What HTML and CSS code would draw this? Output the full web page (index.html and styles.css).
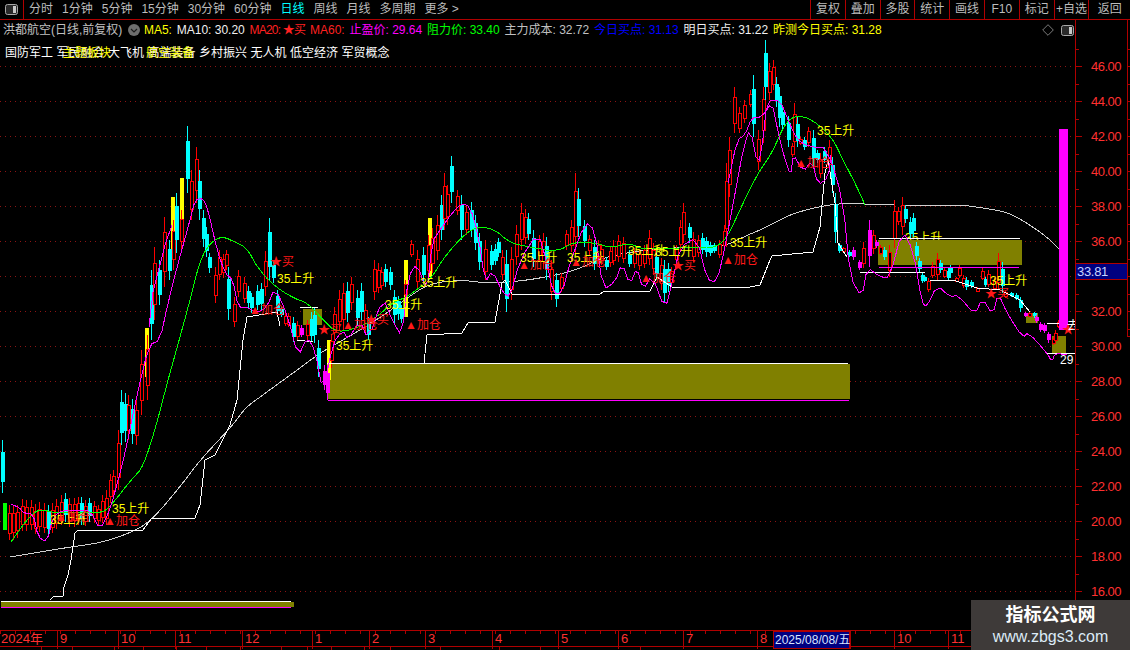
FILE: index.html
```html
<!DOCTYPE html>
<html lang="zh">
<head>
<meta charset="utf-8">
<title>洪都航空</title>
<link rel="stylesheet" href="styles.css">
</head>
<body>
<div class="app">
  <header class="topbar">
    <div class="panel-btn">
      <svg class="panel-icon" viewBox="0 0 13 11"><rect x="0.5" y="0.5" width="12" height="10" rx="2"/><rect class="panel-icon-fill" x="8" y="2" width="3" height="7"/></svg>
    </div>
    <nav class="tabs">
      <span>分时</span><span>1分钟</span><span>5分钟</span><span>15分钟</span><span>30分钟</span><span>60分钟</span>
      <span class="tab-on">日线</span><span>周线</span><span>月线</span><span>多周期</span><span>更多 &gt;</span>
    </nav>
    <div class="tools">
      <span>复权</span><span>叠加</span><span>多股</span><span>统计</span><span>画线</span><span>F10</span><span>标记</span><span>+自选</span><span>返回</span>
    </div>
  </header>
  <main class="stage">
    <svg id="chart" class="chart" viewBox="0 20 1130 610" width="1130" height="610"></svg>
    <div class="legend">
      <span class="c-grey">洪都航空(日线,前复权)</span>
      <svg class="chev" viewBox="0 0 12 12"><circle cx="6" cy="6" r="6"/><path d="M3 5l3 3 3-3"/></svg>
      <span class="c-yellow">MA5:</span>
      <span class="c-white">MA10: 30.20</span>
      <span class="c-red tight">MA20: ★买</span>
      <span class="c-red">MA60:</span>
      <span class="c-magenta">止盈价: 29.64</span>
      <span class="c-green">阻力价: 33.40</span>
      <span class="c-grey">主力成本: 32.72</span>
      <span class="c-blue">今日买点: 31.13</span>
      <span class="c-white">明日买点: 31.22</span>
      <span class="c-yellow">昨测今日买点: 31.28</span>
      <div class="legend-icons">
        <svg class="diamond" viewBox="0 0 12 12"><path d="M6 .7L11.3 6 6 11.3.7 6z"/></svg>
        <svg class="panel-icon" viewBox="0 0 13 11"><rect x="0.5" y="0.5" width="12" height="10" rx="2"/><rect class="panel-icon-fill" x="8" y="2" width="3" height="7"/></svg>
      </div>
    </div>
    <div class="tags">
      <span>国防军工</span><span>军民融合</span><span>大飞机</span><span>高端装备</span><span>乡村振兴</span><span>无人机</span><span>低空经济</span><span>军贸概念</span>
      <span class="tag-over tag-a">主题板块</span><span class="tag-over tag-b">航空装备</span>
    </div>
  </main>
  <footer class="timeaxis">
    <span>2024年</span><span>9</span><span>10</span><span>11</span><span>12</span><span>1</span><span>2</span><span>3</span><span>4</span><span>5</span><span>6</span><span>7</span><span>8</span><span class="t-cursor">2025/08/08/五</span><span></span><span>10</span><span>11</span>
  </footer>
  <div class="subticks">
    <i></i><i></i><i></i><i></i><i></i><i></i><i></i><i></i><i></i><i></i><i></i><i></i><i></i><i></i><i></i><i></i><i></i>
  </div>
  <aside class="watermark">
    <strong>指标公式网</strong>
    <span>www.zbgs3.com</span>
  </aside>
</div>
<script src="chart.js"></script>
</body>
</html>
```
FILE: styles.css
```css
* { box-sizing: border-box; }
html, body { margin: 0; padding: 0; background: #000; }
body { font-family: "Liberation Sans", "Noto Sans CJK SC", sans-serif; font-size: 12px; }
.app { position: relative; width: 1130px; height: 650px; overflow: hidden; background: #000; display: flex; flex-direction: column; }

.topbar { flex: none; height: 20px; display: flex; border-bottom: 1px solid #b00000; color: #bcbcbc; line-height: 19px; }
.panel-btn { width: 24px; display: flex; align-items: center; justify-content: center; border-right: 1px solid #b00000; }
.panel-icon { width: 13px; height: 11px; display: block; }
.panel-icon rect { fill: #2a2a2a; stroke: #a8a8a8; }
.panel-icon .panel-icon-fill { fill: #c8c8c8; stroke: none; }
.tabs { display: flex; gap: 9px; padding-left: 5px; white-space: nowrap; }
.tab-on { color: #00ffff; }
.tools { margin-left: auto; display: flex; width: 320px; }
.tools span { width: 34.8px; text-align: center; border-left: 1px solid #b00000; white-space: nowrap; }
.tools span:last-child { flex: 1; }

.stage { flex: none; position: relative; height: 610px; }
.chart { display: block; font-family: "Liberation Sans", "Noto Sans CJK SC", sans-serif; font-size: 12px; shape-rendering: crispEdges; }
.legend { position: absolute; left: 3px; top: 1px; width: 1072px; height: 18px; display: flex; align-items: center; gap: 4.8px; white-space: nowrap; line-height: 18px; }
.chev { width: 12px; height: 12px; flex: none; margin: 0 -1px 0 1px; }
.chev circle { fill: #6e6e6e; }
.chev path { fill: none; stroke: #1c1c1c; stroke-width: 1.2; }
.legend-icons { margin-left: auto; display: flex; align-items: center; gap: 7px; padding-right: 1px; }
.diamond { width: 12px; height: 12px; }
.diamond path { fill: none; stroke: #7c7c7c; }
.tight { letter-spacing: -0.8px; }
.c-grey { color: #c0c0c0; }
.c-white { color: #f0f0f0; }
.c-yellow { color: #ffff00; }
.c-red { color: #ff2020; }
.c-magenta { color: #ff00ff; }
.c-green { color: #00ff00; }
.c-blue { color: #0000ff; }
.tags { position: absolute; left: 5px; top: 25px; display: flex; gap: 3.5px; color: #fff; white-space: nowrap; line-height: 16px; }
.tag-over { position: absolute; top: 0; color: #ffff00; }
.tag-a { left: 58px; }
.tag-b { left: 141px; }

.timeaxis { flex: none; height: 17px; display: grid; grid-template-columns: 57px 61px 57px 67px 70px 57px 56px 67px 66px 60px 65px 74px 16px 77px 44px 54px 1fr; color: #ff3030; font-size: 13px; line-height: 16px; border-top: 1px solid #b00000; border-bottom: 1px solid #b00000; background: repeating-linear-gradient(90deg, #b00000 0 1px, transparent 1px 15px) 0 0 / 100% 3px no-repeat; }
.timeaxis span { padding-left: 2px; border-left: 1px solid #b00000; white-space: nowrap; min-width: 0; }
.timeaxis span:first-child { border-left: 0; padding-left: 1px; }
.timeaxis .t-cursor { background: #000080; color: #d8e4ff; font-size: 12px; border: 1px solid #b00000; padding-left: 1px; }
.subticks { flex: 1; display: grid; grid-template-columns: 42px 31px 42px 29px 33px 30px 34px 41px 26px 24px 33px 26px 50px 59px 41px 100px 1fr; }
.subticks i { border-right: 1px solid #b00000; }

.watermark { position: absolute; right: 0; bottom: 0; width: 159px; height: 50px; background: #3e3a39; display: flex; flex-direction: column; align-items: center; justify-content: center; color: #fff; }
.watermark strong { font-size: 18px; line-height: 24px; font-weight: 700; }
.watermark span { font-size: 16px; line-height: 20px; color: #dcebf7; }

.grid { stroke: #8c1414; stroke-width: 1; stroke-dasharray: 1 4; fill: none; }
.axis { stroke: #b00000; stroke-width: 1; fill: none; }
.price { fill: #ff3030; font-size: 13px; letter-spacing: -0.5px; }
.cur-box { fill: #000080; stroke: #b00000; }
.cur-text { fill: #c8d4ff; font-size: 13px; letter-spacing: -0.3px; }
.olive { fill: #808000; }
.l-white { stroke: #ffffff; fill: none; stroke-width: 1; }
.l-grey { stroke: #d0d0d0; fill: none; stroke-width: 1; }
.l-green { stroke: #00ff00; fill: none; stroke-width: 1; }
.l-mag { stroke: #ff00ff; fill: none; stroke-width: 1; }
.l-pink { stroke: #ff00ff; fill: none; stroke-width: 1; }
.wick-r { stroke: #ff0000; }
.wick-c { stroke: #00ffff; }
.wick-m { stroke: #ff00ff; }
.wick-y { stroke: #ffff00; }
.body-r { fill: #000; stroke: #ff0000; }
.body-c { fill: #00ffff; }
.body-m { fill: #ff00ff; }
.body-y { fill: #ffff00; }
.body-g { fill: #00ff00; }
.lab-y { fill: #ffff00; }
.lab-r { fill: #ff1818; }
.lab-w { fill: #ffffff; }
```
FILE: chart.js
```js
(function () {
  var svg = document.getElementById('chart');
  var out = [];
  function priceY(p) { return 66 + (46 - p) * 17.5; }
  function poly(cls, pts) {
    out.push('<polyline class="' + cls + '" points="' + pts.map(function (p) { return p[0].toFixed(1) + ',' + p[1].toFixed(1); }).join(' ') + '"/>');
  }
  /* corner cutting turns the hand-read points into a moving-average curve */
  function smooth(pts, rounds) {
    for (var r = 0; r < rounds; r++) {
      var next = [pts[0]];
      for (var i = 0; i < pts.length - 1; i++) {
        var a = pts[i], b = pts[i + 1];
        next.push([a[0] * 0.75 + b[0] * 0.25, a[1] * 0.75 + b[1] * 0.25]);
        next.push([a[0] * 0.25 + b[0] * 0.75, a[1] * 0.25 + b[1] * 0.75]);
      }
      next.push(pts[pts.length - 1]);
      pts = next;
    }
    return pts;
  }
  function rect(cls, x, y, w, h) {
    out.push('<rect class="' + cls + '" x="' + x + '" y="' + y + '" width="' + w + '" height="' + h + '"/>');
  }
  function line(cls, x1, y1, x2, y2) {
    out.push('<line class="' + cls + '" x1="' + x1 + '" y1="' + y1 + '" x2="' + x2 + '" y2="' + y2 + '"/>');
  }
  function text(cls, x, y, s) {
    out.push('<text class="' + cls + '" x="' + x + '" y="' + y + '">' + s + '</text>');
  }

  /* grid and price axis */
  var p;
  for (p = 46; p >= 16; p -= 2) {
    line('grid', 0, priceY(p) + 0.5, 1075, priceY(p) + 0.5);
  }
  line('axis', 1075.5, 20, 1075.5, 630);
  line('axis', 1127.5, 20, 1127.5, 336);
  line('axis', 1127, 336.5, 1130, 336.5);
  for (p = 47; p >= 15; p -= 1) {
    var ty = Math.round(priceY(p)) + 0.5;
    if (ty < 24 || ty > 628) continue;
    line('axis', 1075, ty, p % 2 === 0 ? 1082 : 1079, ty);
    if (ty < 336) line('axis', 1127, ty, 1130, ty);
  }
  for (p = 46; p >= 16; p -= 2) {
    if (p === 34) continue;
    text('price', 1091, priceY(p) + 5, p.toFixed(2));
  }

  /* long average */
  poly('l-grey', smooth([[10,557],[70,547],[100,543],[130,533],[150,522],[180,487],[200,460],[233,425],[245,408],[260,397],[293,373],[320,353],[343,340],[377,320],[407,298],[430,283],[463,280],[485,283],[513,282],[547,277],[577,270],[603,257],[657,248],[723,247],[743,237],[767,227],[793,213],[827,205],[850,203],[880,205],[917,205],[963,205],[983,208],[1007,212],[1027,223],[1047,237],[1062,252]], 2));

  /* text hidden behind the resistance box */
  text('lab-y', 905, 242, '35上升');

  /* zones */
  [[1,602,293,5],[327,364,523,35],[878,240,144,25],[303,309,19,16],[1026,313,12,10],[1052,336,14,17]].forEach(function (b) {
    rect('olive', b[0], b[1], b[2], b[3]);
  });

  /* candles: x, wick top, wick bottom, colour */
  var K = [[8,505,540,'r'],[30,500,530,'r'],[47,505,535,'c'],[60,495,525,'r'],[80,497,525,'c'],[97,505,525,'r'],[105,490,525,'r'],[112,470,495,'r'],[117,430,490,'r'],[120,390,445,'c'],[127,395,440,'r'],[135,400,445,'r'],[140,350,415,'r'],[146,335,400,'r'],[150,270,340,'c'],[153,247,320,'r'],[158,260,305,'c'],[163,217,287,'r'],[168,240,280,'c'],[172,220,270,'r'],[175,193,253,'c'],[180,210,250,'r'],[186,126,193,'c'],[190,170,220,'r'],[195,147,203,'r'],[198,170,220,'c'],[202,210,247,'c'],[205,227,257,'c'],[208,253,273,'c'],[214,267,303,'r'],[218,250,280,'r'],[225,250,270,'r'],[227,267,320,'c'],[233,297,327,'r'],[237,270,297,'r'],[243,277,303,'r'],[250,293,313,'c'],[256,285,310,'c'],[260,283,310,'c'],[268,218,280,'c'],[272,260,283,'c'],[276,290,317,'c'],[280,307,317,'c'],[287,313,327,'r'],[292,317,342,'c'],[300,325,337,'m'],[306,320,340,'r'],[313,307,343,'c'],[317,340,377,'c'],[323,365,390,'m'],[326,365,400,'m'],[333,307,340,'r'],[338,290,330,'r'],[342,283,330,'r'],[350,277,310,'r'],[356,290,325,'c'],[360,283,320,'c'],[367,317,340,'c'],[373,260,300,'r'],[380,267,290,'r'],[389,267,290,'c'],[393,290,323,'c'],[400,305,323,'c'],[410,240,257,'r'],[416,250,290,'r'],[422,247,283,'c'],[427,235,280,'r'],[436,215,260,'r'],[440,195,240,'c'],[443,173,230,'r'],[446,185,225,'r'],[450,156,203,'c'],[456,190,215,'r'],[460,195,240,'c'],[465,205,235,'r'],[470,202,237,'c'],[474,215,250,'c'],[478,233,270,'c'],[484,240,280,'r'],[490,245,270,'c'],[497,238,257,'c'],[501,250,280,'r'],[505,250,312,'c'],[510,247,300,'r'],[515,225,265,'r'],[520,203,250,'r'],[527,213,240,'c'],[532,230,267,'c'],[538,235,260,'r'],[545,237,280,'c'],[550,260,300,'r'],[555,273,307,'c'],[560,273,292,'r'],[565,230,250,'r'],[570,220,252,'r'],[574,173,253,'r'],[577,188,237,'c'],[583,220,247,'c'],[588,235,255,'r'],[593,240,270,'c'],[600,245,265,'r'],[605,257,270,'c'],[612,240,265,'r'],[617,235,262,'r'],[622,237,263,'r'],[628,250,267,'c'],[633,248,268,'r'],[638,250,270,'r'],[643,245,268,'r'],[648,230,265,'r'],[655,250,280,'c'],[660,258,290,'r'],[663,260,303,'c'],[670,267,287,'r'],[675,245,262,'r'],[682,203,243,'r'],[688,223,243,'c'],[692,232,262,'r'],[697,235,257,'r'],[705,237,257,'c'],[713,243,253,'c'],[718,240,258,'r'],[723,225,250,'r'],[725,163,247,'r'],[728,137,197,'r'],[733,87,133,'r'],[738,107,133,'r'],[743,100,123,'r'],[749,90,107,'r'],[752,75,137,'c'],[757,130,170,'r'],[762,87,143,'r'],[764,40,100,'c'],[768,63,100,'r'],[772,60,90,'r'],[775,77,107,'c'],[778,87,127,'c'],[781,107,130,'c'],[787,116,147,'c'],[791,143,157,'r'],[793,103,152,'r'],[796,117,147,'c'],[799,137,145,'r'],[803,137,150,'c'],[807,127,147,'r'],[812,130,167,'c'],[816,150,163,'c'],[819,153,178,'r'],[823,147,163,'c'],[828,140,170,'r'],[831,157,193,'c'],[834,193,243,'c'],[838,243,253,'c'],[842,247,253,'r'],[848,250,257,'c'],[852,247,260,'m'],[858,260,270,'m'],[868,220,267,'m'],[875,240,248,'m'],[879,245,255,'r'],[883,247,260,'c'],[888,245,277,'r'],[893,200,248,'r'],[897,207,225,'r'],[901,197,235,'r'],[904,205,223,'c'],[909,217,238,'c'],[912,213,237,'c'],[915,242,260,'c'],[918,258,272,'c'],[921,273,283,'c'],[923,275,282,'c'],[927,278,292,'r'],[931,262,278,'r'],[936,253,280,'r'],[939,260,273,'c'],[943,268,278,'r'],[947,268,280,'c'],[949,265,275,'c'],[955,277,282,'r'],[958,265,278,'r'],[965,277,290,'c'],[970,280,288,'c'],[976,287,292,'r'],[981,268,280,'r'],[984,277,287,'c'],[987,270,287,'r'],[993,278,290,'r'],[997,253,290,'r'],[1001,262,293,'c'],[1004,290,298,'r'],[1010,292,297,'c'],[1015,293,300,'c'],[1019,297,312,'c'],[1024,312,317,'m'],[1033,312,318,'c'],[1035,315,323,'m'],[1039,322,332,'m'],[1043,323,333,'m'],[1047,332,343,'m'],[1052,337,345,'r'],[1054,330,343,'r'],[1057,320,328,'r'],[1061,320,330,'c']];

  var seed = 17;
  function rnd() { seed = (seed * 1103515 + 12345) % 2147483; return seed / 2147483; }
  var list = [];
  K.forEach(function (k, i) {
    list.push(k);
    var n = K[i + 1];
    if (n && n[0] - k[0] >= 6) {
      for (var x = k[0] + 4.2; x < n[0] - 2; x += 4.2) {
        var f = (x - k[0]) / (n[0] - k[0]);
        var j = (rnd() - 0.5) * 8;
        list.push([x, k[1] + (n[1] - k[1]) * f + j, k[2] + (n[2] - k[2]) * f + j, rnd() > (x < 105 ? 0.25 : 0.45) ? 'r' : 'c']);
      }
    }
  });

  /* trend bars */
  list.push([1, 440, 493, 'c']);
  rect('body-g', 3, 503, 4, 27);
  [[147,328,49],[173,197,56],[182,178,55],[329,340,40],[406,260,57],[430,218,59]].forEach(function (b) {
    rect('body-y', b[0] - 2, b[1], 4, b[2]);
  });

  list.forEach(function (c) {
    var x = Math.round(c[0]), t = Math.round(c[1]), b = Math.round(c[2]), h = b - t;
    line('wick-' + c[3], x + 1.5, t, x + 1.5, b);
    var by = Math.round(t + h * 0.22), bh = Math.max(3, Math.round(h * 0.56));
    if (c[3] === 'r') rect('body-r', x + 0.5, by + 0.5, 3, bh);
    else rect('body-' + c[3], x, by, 4, bh);
  });

  /* zone edges */
  [[1,601,291],[327,363,848],[879,238,1020],[300,307,318],[1047,323,1067],[1047,353,1075]].forEach(function (e) {
    line('l-white', e[0], e[1] + 0.5, e[2], e[1] + 0.5);
  });
  [[1,607,291],[328,400,849],[879,267,1019]].forEach(function (e) {
    line('l-mag', e[0], e[1] + 0.5, e[2], e[1] + 0.5);
  });

  /* stepped support line */
  poly('l-white', [[50,600],[53,597],[63,596],[63,590],[68,575],[71,560],[75,533],[78,530],[143,530],[152,518],[195,518],[200,505],[205,460],[215,455],[230,425],[237,400],[243,340],[247,317],[277,312],[280,326]]);
  poly('l-white', [[297,340],[313,342]]);
  poly('l-white', [[424,363],[427,335],[462,333],[468,323],[495,322],[502,283],[505,280],[512,294],[600,294],[605,291],[650,291],[657,277],[672,287],[750,287],[760,285],[770,260],[772,256],[813,252],[820,227],[825,173],[828,160],[835,203],[838,243],[847,257]]);
  poly('l-white', [[860,272],[925,272]]);
  poly('l-white', [[930,280],[953,280],[977,288],[1000,290],[1020,300],[1030,312]]);

  /* green average */
  poly('l-green', smooth([[11,542],[23,525],[33,513],[42,509],[53,513],[83,512],[103,513],[113,503],[127,485],[133,478],[143,467],[155,430],[168,380],[180,337],[190,300],[200,260],[210,243],[222,236],[235,242],[247,248],[257,267],[273,285],[293,298],[308,303],[323,320],[337,333],[360,327],[377,317],[393,302],[407,297],[420,287],[430,280],[447,253],[472,227],[493,228],[510,243],[530,247],[557,252],[573,242],[597,243],[610,248],[630,243],[643,250],[697,247],[723,247],[743,203],[758,173],[772,153],[785,123],[797,115],[813,120],[832,137],[843,160],[857,187],[865,205]], 2));

  /* magenta averages */
  poly('l-pink', smooth([[11,504],[20,508],[23,513],[33,513],[38,537],[47,542],[53,517],[63,510],[77,510],[90,510],[100,530],[110,510],[120,473],[125,453],[138,390],[149,345],[160,340],[168,303],[177,267],[190,220],[195,200],[203,198],[208,210],[217,250],[225,273],[233,280],[238,307],[247,307],[257,313],[267,307],[275,287],[288,317],[298,357],[307,337],[315,350],[323,393],[333,343],[343,330],[348,340],[360,320],[368,340],[383,297],[392,320],[402,337],[408,277],[417,263],[427,293],[432,242],[440,230],[452,213],[462,203],[470,207],[478,233],[485,283],[492,270],[503,293],[510,297],[520,260],[538,232],[547,263],[553,293],[562,293],[570,263],[585,222],[595,230],[603,290],[615,282],[622,263],[630,285],[637,267],[643,290],[652,275],[665,310],[672,283],[680,247],[697,237],[707,280],[717,282],[725,247],[737,183],[743,150],[750,127],[758,167],[763,140],[767,100],[780,100],[788,120],[797,140],[810,147],[827,147],[843,200],[850,277],[862,298],[867,267],[880,277],[890,277],[902,230],[913,250],[922,303],[927,307],[937,285],[950,297],[958,295],[975,315],[982,298],[993,315],[998,293],[1007,313],[1023,338],[1028,332],[1047,353],[1052,362],[1055,353],[1067,355]], 1));
  poly('l-pink', smooth([[728,183],[737,140],[745,135],[752,117],[762,117],[772,102],[777,127],[783,153],[791,177],[793,153],[803,172],[812,160],[818,185],[828,178],[831,155]], 1));
  poly('l-pink', [[149,327],[153,292],[165,245],[172,225]]);

  /* signals */
  rect('body-m', 1059, 129, 9, 201);
  [[112,513,'35上升'],[50,524,'35上升'],[277,283,'35上升'],[336,350,'35上升'],[385,309,'35上升'],[420,287,'35上升'],[520,262,'35上升'],[567,262,'35上升'],[628,255,'35上升'],[655,256,'35上升'],[730,247,'35上升'],[817,135,'35上升'],[990,285,'35上升']].forEach(function (l) {
    text('lab-y', l[0], l[1], l[2]);
  });
  [[104,525,'▲加仓'],[55,521,'▲加仓'],[249,314,'▲加仓'],[342,329,'▲加仓'],[405,329,'▲加仓'],[518,269,'▲加仓'],[570,266,'▲加仓'],[640,282,'▲加仓'],[722,264,'▲加仓'],[795,167,'▲加仓'],[270,266,'★买'],[318,334,'★买'],[365,324,'★买'],[672,270,'★买'],[985,298,'★买'],[1062,334,'★']].forEach(function (l) {
    text('lab-r', l[0], l[1], l[2]);
  });
  text('lab-w', 1060, 364, '29');
  /* a label cut off at the axis */
  out.push('<svg x="1067" y="318" width="8" height="16"><text class="lab-w" x="0" y="12">去</text></svg>');

  /* current price tag */
  rect('cur-box', 1075.5, 263.5, 52, 16);
  text('cur-text', 1077, 276, '33.81');

  svg.innerHTML = out.join('');
})();
```
